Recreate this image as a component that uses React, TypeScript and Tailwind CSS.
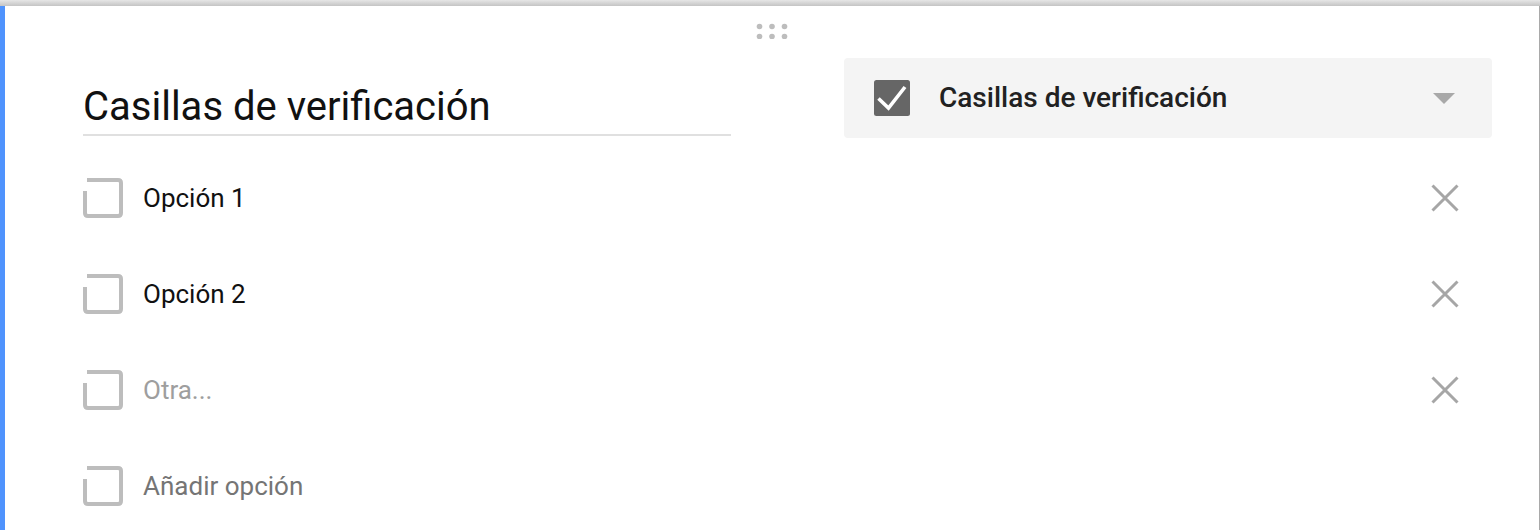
import React from "react";

function EmptyBox() {
  return (
    <svg width="40" height="40" viewBox="0 0 40 40" className="shrink-0">
      <path
        d="M4 2 H35 Q38 2 38 5 V35 Q38 38 35 38 H5 Q2 38 2 35 V13"
        fill="none"
        stroke="#bdbdbd"
        strokeWidth="4"
      />
    </svg>
  );
}

function CloseX() {
  return (
    <svg width="28" height="28" viewBox="0 0 28 28" className="shrink-0">
      <path d="M1.5 1.5 L26.5 26.5 M26.5 1.5 L1.5 26.5" stroke="#a6a6a6" strokeWidth="3" fill="none" />
    </svg>
  );
}

function Row({ label, color, close }: { label: string; color: string; close: boolean }) {
  return (
    <div className="flex h-[96px] shrink-0 items-center pr-[33px]">
      <EmptyBox />
      <span className={`ml-[20px] text-[26px] leading-none ${color}`}>{label}</span>
      <div className="flex-1" />
      {close && <CloseX />}
    </div>
  );
}

export default function App() {
  return (
    <div
      className="flex h-[530px] w-[1540px] flex-col overflow-hidden bg-white"
      style={{ fontFamily: "Roboto, 'Noto Sans', sans-serif" }}
    >
      <div className="h-[6px] w-full shrink-0 bg-linear-to-b from-[#e6e6e6] to-[#c4c4c4]" />
      <div className="flex flex-1 shrink-0">
        <div className="w-[5px] shrink-0 bg-[#4f93fd]" />
        <div className="flex flex-1 flex-col pl-[78px] pr-[47px]">
          <div className="flex h-[52px] shrink-0 justify-center pt-[17px]">
            <svg width="32" height="16" viewBox="0 0 32 16" className="ml-[-32px]">
              {[3.5, 16, 28.5].map((x) =>
                [3.5, 13.5].map((y) => <circle key={`${x}-${y}`} cx={x} cy={y} r="2.8" fill="#bdbdbd" />)
              )}
            </svg>
          </div>
          <div className="flex shrink-0 justify-between">
            <div className="flex w-[648px] flex-col">
              <div className="mt-[25px] text-[40px] leading-[48px] text-[#111]">
                Casillas de verificación
              </div>
              <div className="mt-[3px] h-[2px] bg-[#e0e0e0]" />
            </div>
            <div className="flex h-[80px] w-[648px] items-center rounded-[4px] bg-[#f4f4f4] pl-[30px] pr-[37px]">
              <svg width="36" height="36" viewBox="0 0 36 36" className="shrink-0">
                <rect x="0" y="0" width="36" height="36" rx="2.5" fill="#666666" />
                <path d="M4.5 18.5 L14.5 28 L31 7" fill="none" stroke="#ffffff" strokeWidth="3.6" />
              </svg>
              <span className="ml-[29px] text-[28px] font-medium leading-none text-[#212121]">
                Casillas de verificación
              </span>
              <div className="flex-1" />
              <svg width="22" height="11" viewBox="0 0 22 11">
                <path d="M0 0 H22 L11 11 Z" fill="#a8a8a8" />
              </svg>
            </div>
          </div>
          <div className="mt-[12px] flex shrink-0 flex-col">
            <Row label="Opción 1" color="text-[#111]" close />
            <Row label="Opción 2" color="text-[#111]" close />
            <Row label="Otra..." color="text-[#9e9e9e]" close />
            <Row label="Añadir opción" color="text-[#757575]" close={false} />
          </div>
        </div>
        <div className="w-[1px] shrink-0 bg-[#a9a9a9]" />
      </div>
    </div>
  );
}
